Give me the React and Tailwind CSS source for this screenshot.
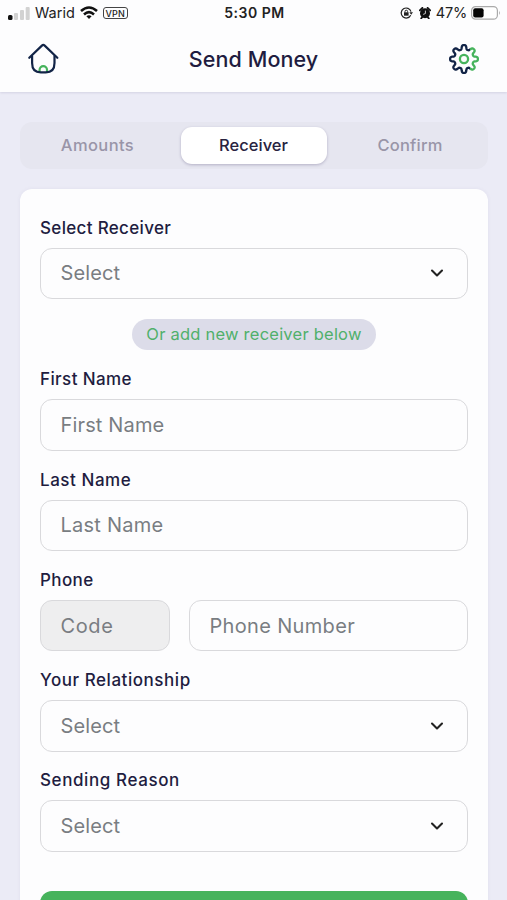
import { ChevronDown } from 'lucide-react'

const NAVY = '#122447'
const GREEN = '#46b35c'

// eight soft teeth around the centre
const gearPoints = Array.from({ length: 192 }, (_, i) => {
  const angle = (i / 192) * Math.PI * 2
  const r = 11.8 + 2.15 * Math.tanh(2 * Math.cos(angle * 8))
  return `${(16 + r * Math.cos(angle)).toFixed(2)},${(16 + r * Math.sin(angle)).toFixed(2)}`
}).join(' ')

function StatusBar() {
  return (
    <div className="grid h-[26px] grid-cols-3 items-center pl-2 pr-[6px] text-sm leading-none text-[#222]">
      <div className="flex items-center">
        <svg width="22" height="13" viewBox="0 0 22 13">
          <rect x="0" y="8" width="4.5" height="5" rx="1.5" fill="#111" />
          <rect x="6" y="6" width="4" height="7" rx="1" fill="#d2d2d2" />
          <rect x="12" y="3" width="4" height="10" rx="1" fill="#d2d2d2" />
          <rect x="17.7" y="0" width="4" height="13" rx="1" fill="#d2d2d2" />
        </svg>
        <span className="ml-[5px] text-[14.5px]">Warid</span>
        <svg className="ml-[5px]" width="18" height="14" viewBox="0 0 18 14" fill="none" stroke="#111" strokeWidth="2.6">
          <path d="M1 5 Q9 -2 17 5" />
          <path d="M4 8.4 Q9 4 14 8.4" />
          <path d="M6.4 10.2 Q9 8.2 11.6 10.2 L9 13Z" fill="#111" stroke="none" />
        </svg>
        <span className="ml-[5px] flex h-3 w-[25px] items-center justify-center rounded-[3px] border border-[#444] text-[9px] font-medium tracking-[0.2px]">
          VPN
        </span>
      </div>
      <div className="text-center text-sm font-semibold tracking-[0.5px]">5:30 PM</div>
      <div className="flex items-center justify-end">
        <svg width="13" height="12" viewBox="0 0 13 12" fill="none" stroke="#222" strokeWidth="1.2">
          <path d="M10.7 8.2 A5 5 0 1 1 11 4.6" />
          <path d="M9.4 5.2 H13 L11.2 7.8Z" fill="#222" stroke="none" />
          <rect x="4" y="5.3" width="4.6" height="3.4" fill="#222" stroke="none" />
          <path d="M5 5.5 V4.5 A1.3 1.3 0 0 1 7.6 4.5 V5.5" strokeWidth="1" />
        </svg>
        <svg className="ml-[6px]" width="12" height="12" viewBox="0 0 12 12">
          <circle cx="6" cy="6.2" r="5" fill="#111" />
          <path d="M0.8 3.4 L3.4 0.8 M11.2 3.4 L8.6 0.8 M2.2 11.4 L3.4 10 M9.8 11.4 L8.6 10" stroke="#111" strokeWidth="1.8" strokeLinecap="round" />
          <path d="M6.4 3.6 V6.5 L4.2 7.4" stroke="#ddd" strokeWidth="0.9" fill="none" />
        </svg>
        <span className="ml-[5px] text-[14.5px] tracking-[-0.2px]">47%</span>
        <svg className="ml-1" width="30" height="14" viewBox="0 0 30 14">
          <rect x="0.6" y="0.6" width="25.8" height="12.6" rx="4" fill="#fff" stroke="#aaa" strokeWidth="1.2" />
          <rect x="2.2" y="2.2" width="10.4" height="9.4" rx="2" fill="#050505" />
          <path d="M28 4.8 Q29.8 6.9 28 9Z" fill="#aaa" />
        </svg>
      </div>
    </div>
  )
}

function HomeIcon() {
  return (
    <svg width="32" height="32" viewBox="0 0 32 32" fill="none" strokeLinecap="round" strokeLinejoin="round" strokeWidth="2.2">
      <path d="M12.6 29 V26.8 A3.7 3.7 0 0 1 20 26.8 V29" stroke={GREEN} strokeLinecap="butt" />
      <path d="M2.3 14.8 L14.9 2.6 Q16.3 1.3 17.7 2.6 L30.3 14.8" stroke={NAVY} />
      <path d="M5.1 13 V20 Q5.1 29.4 13.8 29.4 H18.8 Q27.5 29.4 27.5 20 V13" stroke={NAVY} />
    </svg>
  )
}

function SettingsIcon() {
  return (
    <svg width="32" height="32" viewBox="0 0 32 32" fill="none" strokeWidth="2.3" strokeLinejoin="round">
      <defs>
        <linearGradient id="gear" gradientUnits="userSpaceOnUse" x1="0" y1="0" x2="32" y2="0">
          <stop offset="0.7" stopColor={NAVY} />
          <stop offset="0.7" stopColor={GREEN} />
        </linearGradient>
      </defs>
      <polygon points={gearPoints} stroke="url(#gear)" />
      <circle cx="16" cy="16" r="4.1" stroke={GREEN} />
    </svg>
  )
}

function Label({ children, className }) {
  return <div className={`h-6 text-[17px] leading-6 font-medium text-[#211c40] ${className}`}>{children}</div>
}

function Box({ text, select, className = '', textClass = 'tracking-[0.1px]' }) {
  return (
    <div className={`mt-2 flex h-[51.4px] items-center justify-between rounded-[12px] border border-[#d9d9dc] pr-5 pl-[19.5px] ${className}`}>
      <span className={`text-[20px] text-[#797d82] ${textClass}`}>{text}</span>
      {select && <ChevronDown size={20} strokeWidth={2.5} className="text-[#222]" />}
    </div>
  )
}

export default function App() {
  return (
    <div className="flex h-[900px] w-[507px] flex-col overflow-hidden bg-[#ebebf6] font-['Inter',sans-serif]">
      <header className="h-[92px] shrink-0 bg-[#fdfdfe] shadow-[0_1px_2px_rgba(60,50,110,0.12)]">
        <StatusBar />
        <div className="flex h-[66px] items-center justify-between pr-[27px] pl-[27px]">
          <HomeIcon />
          <h1 className="text-[21.5px] font-medium tracking-[0.1px] text-[#211c40]">Send Money</h1>
          <SettingsIcon />
        </div>
      </header>

      <div className="mx-5 mt-[30px] grid h-[47px] w-[468px] shrink-0 grid-cols-[155px_157px_156px] items-center rounded-[12px] bg-[#e6e6f0] text-center text-[16.5px] font-medium text-[#9995a8]">
        <div className="tracking-[0.4px]">Amounts</div>
        <div className="mx-[5.5px] flex h-[37px] items-center justify-center rounded-[11px] bg-white text-[#28233f] shadow-[0_1px_3px_rgba(50,40,90,0.28)]">
          Receiver
        </div>
        <div className="tracking-[0.2px]">Confirm</div>
      </div>

      <main className="mx-5 mt-5 w-[468px] flex-1 rounded-t-[12px] bg-[#fdfdfe] px-5 pt-[26.6px] shadow-[0_0_4px_rgba(60,50,110,0.06)]">
        <Label className="tracking-[0.33px]">Select Receiver</Label>
        <Box text="Select" select />
        <div className="mx-auto mt-[19.6px] flex h-[31px] w-[244px] items-center justify-center rounded-full bg-[#dcdce9] text-[16.5px] tracking-[0.23px] text-[#50b06b]">
          Or add new receiver below
        </div>

        <Label className="mt-[17.6px] tracking-[0.4px]">First Name</Label>
        <Box text="First Name" textClass="tracking-[0.15px]" />
        <Label className="mt-[16.95px] tracking-[0.55px]">Last Name</Label>
        <Box text="Last Name" textClass="tracking-[0.25px]" />
        <Label className="mt-[16.95px] tracking-[0.4px]">Phone</Label>
        <div className="grid grid-cols-[130px_279px] gap-[19px]">
          <Box text="Code" className="bg-[#eeeeef]" textClass="tracking-[0.6px]" />
          <Box text="Phone Number" textClass="tracking-[0.33px]" />
        </div>
        <Label className="mt-[16.95px] tracking-[0.55px]">Your Relationship</Label>
        <Box text="Select" select />
        <Label className="mt-[16.95px] tracking-[0.6px]">Sending Reason</Label>
        <Box text="Select" select />
        <div className="mt-[39px] h-14 rounded-[12px] bg-[#46b35c]" />
      </main>
    </div>
  )
}
